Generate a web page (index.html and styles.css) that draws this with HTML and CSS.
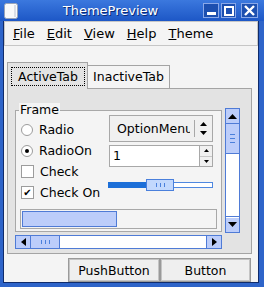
FILE: index.html
```html
<!DOCTYPE html>
<html lang="en">
<head>
    <meta charset="UTF-8">
    <title>ThemePreview</title>
    <link rel="stylesheet" href="styles.css">
</head>
<body>
    <div class="window">
        <div class="titlebar">
            <svg class="app-icon" width="14" height="16" viewBox="0 0 14 16">
                <rect x="0.5" y="0.5" width="13" height="15" rx="2" fill="#fafafa" stroke="#9aa4b8"/>
                <rect x="10" y="2" width="2" height="12" fill="#dcdfe6"/>
            </svg>
            <div class="title">ThemePreview</div>
            <div class="title-buttons">
                <span class="tbtn min"><svg width="9" height="3"><rect width="9" height="3" fill="#fff"/></svg></span>
                <span class="tbtn max"><svg width="10" height="10"><rect x="1" y="1" width="8" height="8" fill="none" stroke="#fff" stroke-width="2"/></svg></span>
                <span class="tbtn close"><svg width="11" height="11"><path d="M1 1 L10 10 M10 1 L1 10" stroke="#fff" stroke-width="2.4"/></svg></span>
            </div>
        </div>

        <div class="client">
            <div class="menubar">
                <span><u>F</u>ile</span>
                <span><u>E</u>dit</span>
                <span><u>V</u>iew</span>
                <span><u>H</u>elp</span>
                <span><u>T</u>heme</span>
            </div>

            <div class="content">
                <div class="tabbar">
                    <div class="tab active"><span class="focus">ActiveTab</span></div>
                    <div class="tab">InactiveTab</div>
                </div>

                <div class="pane">
                    <div class="scrollarea">
                        <div class="viewport">
                            <div class="frame">
                                <div class="frame-title">Frame</div>
                                <div class="frame-body">
                                    <div class="col-left">
                                        <div class="opt"><span class="radio"></span>Radio</div>
                                        <div class="opt"><span class="radio on"></span>RadioOn</div>
                                        <div class="opt"><span class="check"></span>Check</div>
                                        <div class="opt"><span class="check on">&#10004;</span>Check On</div>
                                    </div>
                                    <div class="col-right">
                                        <div class="combo">
                                            <span class="combo-text">OptionMenu</span>
                                            <span class="combo-sep"></span>
                                            <svg class="combo-arrows" width="7" height="13" viewBox="0 0 7 13">
                                                <path d="M0 4 L3.5 0 L7 4Z M0 9 L7 9 L3.5 13Z" fill="#000"/>
                                            </svg>
                                        </div>
                                        <div class="spin">
                                            <div class="spin-field">1</div>
                                            <div class="spin-btns">
                                                <span class="spin-up"><svg width="5" height="3"><path d="M0 3 L2.5 0 L5 3Z"/></svg></span>
                                                <span class="spin-down"><svg width="5" height="3"><path d="M0 0 L5 0 L2.5 3Z"/></svg></span>
                                            </div>
                                        </div>
                                        <div class="slider">
                                            <span class="slider-fill"></span>
                                            <span class="slider-handle"><i></i><i></i><i></i></span>
                                            <span class="slider-rest"></span>
                                        </div>
                                    </div>
                                </div>
                                <div class="progress">
                                    <div class="progress-fill" style="width: 49%"></div>
                                </div>
                            </div>
                        </div>

                        <div class="vscroll">
                            <span class="sb-btn"><svg width="9" height="5"><path d="M0 5 L4.5 0 L9 5Z"/></svg></span>
                            <span class="vthumb"><i></i><i></i><i></i></span>
                            <span class="sb-track"></span>
                            <span class="sb-btn down"><svg width="9" height="5"><path d="M0 0 L9 0 L4.5 5Z"/></svg></span>
                        </div>

                        <div class="hscroll">
                            <span class="sb-btn"><svg width="5" height="8"><path d="M5 0 L0 4 L5 8Z"/></svg></span>
                            <span class="hthumb"><i></i><i></i><i></i></span>
                            <span class="sb-track"></span>
                            <span class="sb-btn right"><svg width="5" height="8"><path d="M0 0 L5 4 L0 8Z"/></svg></span>
                        </div>
                    </div>
                </div>

                <div class="buttons">
                    <button class="btn push">PushButton</button>
                    <button class="btn plain">Button</button>
                </div>
            </div>
        </div>
    </div>
</body>
</html>
```

FILE: styles.css
```css
:root {
    --frame-blue: #2e64c9;
    --frame-dark: #0f2b6b;
    --client-bg: #f4f4f4;
    --pane-bg: #e3e3e3;
    --grey-line: #a4a4a4;
    --sb-border: #4f7bd6;
    --sb-fill: #bccdfa;
}

body {
    margin: 0;
    font-family: "DejaVu Sans", sans-serif;
    font-size: 12.5px;
    color: #000;
}

.window {
    width: 264px;
    height: 287px;
    background: var(--frame-blue);
    display: flex;
    flex-direction: column;
}

/* title bar */
.titlebar {
    height: 21px;
    display: flex;
    align-items: center;
    padding: 0 6px 0 4px;
    background: linear-gradient(#3b78de, #1d57c6);
}

.app-icon {
    display: block;
}

.title {
    flex: 1;
    text-align: center;
    color: #fff;
    font-size: 13px;
    text-shadow: 1px 1px 0 #0b2c78;
}

.title-buttons {
    display: flex;
    gap: 2px;
}

.tbtn {
    width: 16px;
    height: 15px;
    box-sizing: border-box;
    border: 1px solid #8aa8e8;
    background: #1c4fb0;
    display: flex;
    align-items: center;
    justify-content: center;
}

.tbtn.min {
    align-items: flex-end;
    padding-bottom: 2px;
}

.tbtn.max {
    width: 15px;
}

.tbtn.close {
    width: 17px;
    margin-left: 3px;
}

/* client area */
.client {
    flex: 1;
    margin: 0 5px 4px 3px;
    border: 1px solid var(--frame-dark);
    border-top: none;
    background: var(--client-bg);
    display: flex;
    flex-direction: column;
}

.menubar {
    height: 25px;
    box-sizing: border-box;
    border: 1px solid #c6c6c6;
    display: flex;
    align-items: center;
    gap: 12px;
    padding-left: 8px;
    font-size: 13px;
}

.content {
    padding: 16px 6px 0 3px;
}

/* tabs */
.tabbar {
    height: 26px;
    display: flex;
    align-items: flex-end;
}

.tab {
    box-sizing: border-box;
    border: 1px solid var(--grey-line);
    border-bottom: none;
}

.tab.active {
    position: relative;
    z-index: 1;
    width: 81px;
    height: 27px;
    margin-bottom: -1px;
    padding: 4px 2px 3px 3px;
    background: var(--pane-bg);
}

.focus {
    display: block;
    height: 19px;
    box-sizing: border-box;
    border: 1px dotted #000;
    line-height: 17px;
    text-align: center;
}

.tab:not(.active) {
    width: 82px;
    height: 23px;
    border-left: none;
    line-height: 22px;
    text-align: center;
    background: var(--client-bg);
}

.pane {
    width: 245px;
    height: 166px;
    box-sizing: border-box;
    border: 1px solid var(--grey-line);
    background: var(--pane-bg);
    padding: 14px 11px 4px 7px;
}

.scrollarea {
    display: grid;
    grid-template-columns: 207px 15px;
    grid-template-rows: 130px 14px;
    column-gap: 3px;
    row-gap: 2px;
}

/* group box */
.frame {
    margin-top: 7px;
    height: 122px;
    box-sizing: border-box;
    border: 1px solid #a8a8a8;
    background: var(--client-bg);
}

.frame-title {
    width: fit-content;
    height: 14px;
    line-height: 14px;
    margin: -8px 0 -6px 3px;
    padding: 0 1px;
    background: var(--client-bg);
}

.frame-body {
    display: flex;
    padding: 0 8px 0 5px;
}

.col-left {
    width: 88px;
    padding-top: 8px;
}

.opt {
    height: 21px;
    display: flex;
    align-items: center;
    gap: 6px;
}

.radio {
    width: 12px;
    height: 12px;
    box-sizing: border-box;
    border: 1px solid #9c9c9c;
    border-radius: 50%;
    background: #fff;
    display: flex;
    align-items: center;
    justify-content: center;
}

.radio.on::after {
    content: "";
    width: 4px;
    height: 4px;
    border-radius: 50%;
    background: #000;
}

.check {
    width: 13px;
    height: 13px;
    box-sizing: border-box;
    border: 1px solid #9c9c9c;
    background: #fff;
    font-size: 10px;
    line-height: 11px;
    text-align: center;
}

.col-right {
    width: 104px;
    padding-top: 4px;
}

.combo {
    height: 27px;
    box-sizing: border-box;
    border: 1px solid #a8a8a8;
    background: #f0f0f0;
    display: flex;
    align-items: center;
    padding-left: 7px;
}

.combo-text {
    width: 73px;
    overflow: hidden;
    white-space: nowrap;
}

.combo-sep {
    width: 1px;
    height: 17px;
    margin-left: 4px;
    background: #a8a8a8;
}

.combo-arrows {
    margin-left: 5px;
}

.spin {
    margin-top: 3px;
    height: 22px;
    display: flex;
}

.spin-field {
    flex: 1;
    box-sizing: border-box;
    border: 1px solid #a8a8a8;
    background: #fff;
    padding-left: 3px;
    line-height: 20px;
}

.spin-btns {
    width: 13px;
    box-sizing: border-box;
    border: 1px solid #a8a8a8;
    border-left: none;
    display: flex;
    flex-direction: column;
    background: #f0f0f0;
}

.spin-btns span {
    flex: 1;
    display: flex;
    align-items: center;
    justify-content: center;
}

.spin-up {
    border-bottom: 1px solid #c8c8c8;
}

.slider {
    margin: 12px 0 0 -1px;
    width: 105px;
    height: 12px;
    display: flex;
    align-items: center;
}

.slider-fill {
    width: 38px;
    height: 6px;
    background: #1c6fd8;
}

.slider-handle {
    width: 28px;
    height: 12px;
    box-sizing: border-box;
    border: 1px solid #4a80dc;
    background: #c2d8fd;
    display: flex;
    align-items: center;
    justify-content: center;
    gap: 3px;
}

.slider-handle i,
.hthumb i {
    width: 1px;
    height: 4px;
    background: #4a80dc;
}

.slider-rest {
    flex: 1;
    height: 6px;
    box-sizing: border-box;
    border: 1px solid #4f88e0;
    border-left: none;
    background: #fff;
}

.progress {
    margin: 6px 4px 0 4px;
    height: 20px;
    box-sizing: border-box;
    border: 1px solid #a8a8a8;
    padding: 1px;
}

.progress-fill {
    height: 100%;
    box-sizing: border-box;
    border: 1px solid var(--sb-border);
    background: var(--sb-fill);
}

/* scroll bars */
.vscroll,
.hscroll {
    box-sizing: border-box;
    border: 1px solid var(--sb-border);
    background: #fff;
    display: flex;
}

.vscroll {
    align-self: end;
    height: 125px;
    flex-direction: column;
}

.sb-btn {
    flex: none;
    background: var(--sb-fill);
    display: flex;
    align-items: center;
    justify-content: center;
}

.vscroll .sb-btn {
    height: 14px;
}

.vscroll .sb-btn.down {
    height: 15px;
    border-top: 1px solid var(--sb-border);
    box-shadow: inset 0 1px 0 #fff;
}

.hscroll .sb-btn {
    width: 14px;
}

.hscroll .sb-btn.right {
    border-left: 1px solid var(--sb-border);
}

.sb-btn svg path {
    fill: #000;
}

.sb-track {
    flex: 1;
}

.vthumb {
    height: 29px;
    border-top: 1px solid var(--sb-border);
    border-bottom: 1px solid var(--sb-border);
    background: var(--sb-fill);
    display: flex;
    flex-direction: column;
    align-items: center;
    justify-content: center;
    gap: 3px;
}

.vthumb i {
    width: 5px;
    height: 1px;
    background: #4a80dc;
}

.hthumb {
    width: 28px;
    border-left: 1px solid var(--sb-border);
    border-right: 1px solid var(--sb-border);
    background: var(--sb-fill);
    display: flex;
    align-items: center;
    justify-content: center;
    gap: 3px;
}

/* dialog buttons */
.buttons {
    display: flex;
    justify-content: flex-end;
    margin: 4px 1px 0 0;
}

.btn {
    height: 24px;
    box-sizing: border-box;
    border: 1px solid #9a9a9a;
    box-shadow: inset 0 0 0 1px #c4c4c4;
    background: #efefef;
    font-family: "DejaVu Sans", sans-serif;
    font-size: 12.5px;
    color: #000;
    padding: 0;
}

.btn.push {
    width: 92px;
}

.btn.plain {
    width: 91px;
}
```
